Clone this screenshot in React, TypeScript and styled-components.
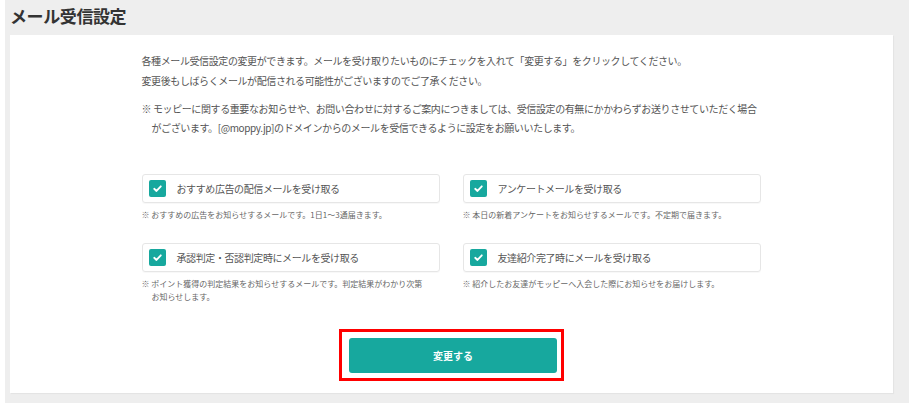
import React, { useState } from "react";
import styled, { createGlobalStyle } from "styled-components";

const GlobalStyle = createGlobalStyle`
  body {
    margin: 0;
    background: #ffffff;
    font-family: "Noto Sans CJK JP", "Noto Sans", sans-serif;
  }
  * {
    box-sizing: border-box;
  }
`;

type MailOption = {
  id: string;
  label: string;
  note: string;
};

const MAIL_OPTIONS: MailOption[] = [
  {
    id: "ad",
    label: "おすすめ広告の配信メールを受け取る",
    note: "※ おすすめの広告をお知らせするメールです。1日1～3通届きます。",
  },
  {
    id: "enquete",
    label: "アンケートメールを受け取る",
    note: "※ 本日の新着アンケートをお知らせするメールです。不定期で届きます。",
  },
  {
    id: "judge",
    label: "承認判定・否認判定時にメールを受け取る",
    note: "※ ポイント獲得の判定結果をお知らせするメールです。判定結果がわかり次第お知らせします。",
  },
  {
    id: "friend",
    label: "友達紹介完了時にメールを受け取る",
    note: "※ 紹介したお友達がモッピーへ入会した際にお知らせをお届けします。",
  },
];

const CheckIcon = () => (
  <svg width="11" height="11" viewBox="0 0 12 12" fill="none">
    <path
      d="M2.4 6.3 L4.9 8.7 L9.6 3.6"
      stroke="#ffffff"
      strokeWidth="2"
      strokeLinecap="round"
      strokeLinejoin="round"
    />
  </svg>
);

const MailSettings = () => {
  const [checked, setChecked] = useState<Record<string, boolean>>({
    ad: true,
    enquete: true,
    judge: true,
    friend: true,
  });

  const toggle = (id: string) => {
    setChecked((prev) => ({ ...prev, [id]: !prev[id] }));
  };

  return (
    <Section>
      <Title>メール受信設定</Title>
      <Panel>
        <Content>
          <Intro>
            各種メール受信設定の変更ができます。メールを受け取りたいものにチェックを入れて「変更する」をクリックしてください。
            <br />
            変更後もしばらくメールが配信される可能性がございますのでご了承ください。
          </Intro>
          <Caution>
            ※ モッピーに関する重要なお知らせや、お問い合わせに対するご案内につきましては、受信設定の有無にかかわらずお送りさせていただく場合がございます。[@moppy.jp]のドメインからのメールを受信できるように設定をお願いいたします。
          </Caution>

          <OptionGrid>
            {MAIL_OPTIONS.map((option) => (
              <OptionItem key={option.id}>
                <OptionCard onClick={() => toggle(option.id)}>
                  <CheckBox $checked={!!checked[option.id]}>
                    {checked[option.id] && <CheckIcon />}
                  </CheckBox>
                  <OptionLabel>{option.label}</OptionLabel>
                </OptionCard>
                <OptionNote>{option.note}</OptionNote>
              </OptionItem>
            ))}
          </OptionGrid>

          <ButtonHighlight>
            <SubmitButton type="button">変更する</SubmitButton>
          </ButtonHighlight>
        </Content>
      </Panel>
    </Section>
  );
};

const App = () => (
  <>
    <GlobalStyle />
    <MailSettings />
  </>
);

const Section = styled.section`
  margin-left: 5px;
  width: 904px;
  background: #eeeeee;
  padding: 0 16px 10px 5px;
`;

const Title = styled.h2`
  margin: 0;
  height: 35px;
  line-height: 31px;
  font-size: 17px;
  font-weight: 700;
  letter-spacing: -0.4px;
  color: #333333;
`;

const Panel = styled.div`
  background: #ffffff;
  box-shadow: 1px 1px 1px rgba(0, 0, 0, 0.04);
  padding: 16px 0 12px;
`;

const Content = styled.div`
  width: 620px;
  margin: 0 auto;
  display: flex;
  flex-direction: column;
`;

const Intro = styled.p`
  margin: 0;
  font-size: 10px;
  line-height: 19.5px;
  letter-spacing: -0.4px;
  color: #555555;
`;

const Caution = styled.p`
  margin: 8.5px 0 0;
  padding-left: 10px;
  text-indent: -10px;
  font-size: 10px;
  line-height: 19.5px;
  letter-spacing: -0.4px;
  color: #555555;
`;

const OptionGrid = styled.div`
  margin-top: 36px;
  display: grid;
  grid-template-columns: 298px 298px;
  column-gap: 23px;
  row-gap: 21.5px;
`;

const OptionItem = styled.div`
  display: flex;
  flex-direction: column;
`;

const OptionCard = styled.label`
  height: 29px;
  display: flex;
  align-items: center;
  gap: 11px;
  padding-left: 6px;
  border: 1px solid #e6e6e6;
  border-radius: 3px;
  box-shadow: 0 1px 1px rgba(0, 0, 0, 0.03);
  cursor: pointer;
`;

const CheckBox = styled.span<{ $checked: boolean }>`
  width: 17px;
  height: 17px;
  border-radius: 2px;
  display: flex;
  align-items: center;
  justify-content: center;
  background: ${(p) => (p.$checked ? "#17a89e" : "#ffffff")};
  border: ${(p) => (p.$checked ? "none" : "1px solid #cccccc")};
  flex-shrink: 0;
`;

const OptionLabel = styled.span`
  font-size: 10px;
  letter-spacing: -0.4px;
  color: #555555;
`;

const OptionNote = styled.p`
  margin: 5.5px 0 0;
  padding-left: 10px;
  text-indent: -10px;
  font-size: 8px;
  line-height: 13px;
  color: #666666;
  max-width: 282px;
`;

const ButtonHighlight = styled.div`
  margin: 25.5px auto 0;
  border: 3px solid #ff0000;
  padding: 6px 4px 5px 7px;
  display: flex;
`;

const SubmitButton = styled.button`
  width: 208px;
  height: 35px;
  border: none;
  border-radius: 3px;
  background: #17a89e;
  color: #ffffff;
  font-family: "Noto Sans CJK JP", "Noto Sans", sans-serif;
  font-size: 10px;
  font-weight: 700;
  cursor: pointer;
`;

export default App;
